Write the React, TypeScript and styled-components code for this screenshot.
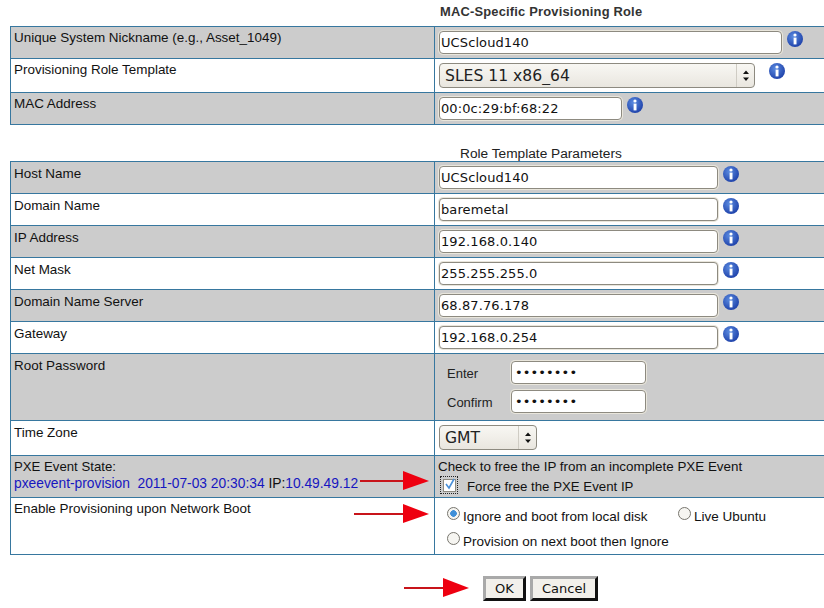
import React from "react";
import styled, { createGlobalStyle } from "styled-components";

const Global = createGlobalStyle`
  html, body { margin: 0; padding: 0; background: #fff; overflow: hidden; }
  body { font-family: "Liberation Sans", Arial, sans-serif; font-size: 13px; color: #111; }
`;
const Page = styled.div`
  position: relative; width: 824px; height: 608px; overflow: hidden; padding-left: 10px; box-sizing: border-box;
`;
const Heading = styled.div<{ $bold?: boolean; $left: number; $h: number; $pb: number }>`
  height: ${(p) => p.$h}px; box-sizing: border-box; padding-left: ${(p) => p.$left}px;
  display: flex; align-items: flex-end; padding-bottom: ${(p) => p.$pb}px;
  font-weight: ${(p) => (p.$bold ? 700 : 400)}; color: ${(p) => (p.$bold ? "#333" : "#222")};
  font-size: ${(p) => (p.$bold ? "12.9px" : "13.7px")}; letter-spacing: ${(p) => (p.$bold ? "0.2px" : "0")};
`;
const Table = styled.table`
  width: 830px; table-layout: fixed; border-collapse: collapse;
`;
const Row = styled.tr<{ $gray?: boolean; $h: number }>`
  height: ${(p) => p.$h}px; background: ${(p) => (p.$gray ? "#cccccc" : "#ffffff")};
`;
const Label = styled.td<{ $top?: number }>`
  width: 424px; box-sizing: border-box; border: 1px solid #37779f; vertical-align: top;
  padding: ${(p) => p.$top ?? 4}px 3px 0;
  line-height: 16px; font-size: 13.45px;
`;
const Value = styled.td`
  border: 1px solid #37779f; vertical-align: top; padding: 4px 4px 0; line-height: 16px;
`;
const Line = styled.div`
  display: flex; align-items: flex-start;
`;
const Text = styled.input<{ $w: number }>`
  width: ${(p) => p.$w}px; height: 23px; box-sizing: border-box; margin: 0; padding: 0 1px;
  border: 1px solid #8d8a80; border-radius: 4px; background: #fff; outline: none;
  box-shadow: 0 0 0 1px #e9e6dc; font: 13px "DejaVu Sans", sans-serif; color: #111; letter-spacing: 0.1px;
  &[type="password"] { padding: 0 3px; }
`;
const Info = styled.svg<{ $ml: number }>`
  width: 16px; height: 16px; margin-left: ${(p) => p.$ml}px; flex: none;
`;
const SelectBox = styled.div<{ $w: number }>`
  position: relative; width: ${(p) => p.$w}px; height: 25px; flex: none;
`;
const Select = styled.select`
  appearance: none; width: 100%; height: 100%; box-sizing: border-box; margin: 0; padding: 0 5px;
  border: 1px solid #8d8a80; border-radius: 4px; outline: none; color: #222;
  background: linear-gradient(#f8f7f3, #e9e6df); font: 15.6px "DejaVu Sans", sans-serif;
`;
const Arrows = styled.svg`
  position: absolute; right: 0; top: 1px; width: 18px; height: 23px; border-left: 1px solid #cfccc4; pointer-events: none;
`;
const PassGroup = styled.div`
  padding-top: 3px;
`;
const PassRow = styled.div`
  display: flex; align-items: center; height: 23px; margin-bottom: 6px;
`;
const PassLabel = styled.span`
  width: 72px; padding: 2px 0 0 8px; box-sizing: border-box; color: #222; font-size: 13px;
`;
const Blue = styled.span`
  color: #1616c0; white-space: pre;
`;
const PxeTitle = styled.div`
  font-size: 13.2px;
`;
const PxeLine = styled.div`
  white-space: pre; font-size: 13.8px; margin-top: 1px;
`;
const FreeLine = styled.div`
  white-space: pre; font-size: 13.4px; margin: -1px 0 0 -1px;
`;
const CheckRow = styled.div`
  display: flex; align-items: flex-start; margin-top: 1px; margin-left: 1px;
`;
const Focus = styled.span`
  width: 16px; height: 16px; border: 1px dotted #222; display: flex; align-items: center; justify-content: center;
`;
const CheckBox = styled.input`
  appearance: none; width: 13px; height: 13px; margin: 0; border: 1px solid #8d8a80; background: #fff; display: block;
`;
const CheckMark = styled.svg`
  position: absolute; left: 3px; top: 1px; width: 14px; height: 14px;
`;
const FocusWrap = styled.span`
  position: relative; display: inline-block;
`;
const CheckLabel = styled.label`
  margin-left: 9px; padding-top: 3px; font-size: 13.25px;
`;
const RadioRow = styled.div<{ $mt: number }>`
  display: flex; align-items: center; margin-top: ${(p) => p.$mt}px; padding-left: 8px; height: 20px;
`;
const Radio = styled.input`
  appearance: none; width: 13px; height: 13px; margin: 0 3px 3px 0; border-radius: 50%; border: 1px solid #77756e; flex: none;
  background: #f6f5f1;
  &:checked { background: radial-gradient(circle, #3f8fd8 0 3px, #f6f5f1 3.6px); }
`;
const RadioLabel = styled.label<{ $w?: number }>`
  width: ${(p) => (p.$w ? `${p.$w}px` : "auto")}; padding-top: 4px; font-size: 13.5px;
`;
const Actions = styled.div`
  display: flex; gap: 4px; padding: 21px 0 0 473px;
`;
const Btn = styled.button<{ $w: number }>`
  width: ${(p) => p.$w}px; height: 25px; box-sizing: border-box; padding: 0; margin: 0;
  border: 3px solid; border-color: #a9a9a9 #111 #111 #a9a9a9; background: #f2f0eb; color: #111;
  font: 13px "DejaVu Sans", sans-serif;
`;
const Overlay = styled.svg`
  position: absolute; left: 0; top: 0; width: 824px; height: 608px; pointer-events: none;
`;

const InfoIcon = ({ ml }: { ml: number }) => (
  <Info $ml={ml} viewBox="0 0 16 16">
    <defs>
      <radialGradient id="ig" cx="40%" cy="35%" r="70%">
        <stop offset="0%" stopColor="#5b8be0" />
        <stop offset="100%" stopColor="#1c3fa8" />
      </radialGradient>
    </defs>
    <circle cx="8" cy="8" r="8" fill="url(#ig)" />
    <circle cx="8" cy="4" r="1.6" fill="#fff" />
    <rect x="6.6" y="6.6" width="2.9" height="6.8" fill="#fff" />
  </Info>
);

const Sel = ({ w, value }: { w: number; value: string }) => (
  <SelectBox $w={w}>
    <Select defaultValue={value}>
      <option>{value}</option>
    </Select>
    <Arrows viewBox="0 0 18 23">
      <path d="M9 6.5l3 3.5H6zM9 17l-3-3.5h6z" fill="#111" />
    </Arrows>
  </SelectBox>
);

const Arrow = ({ x0, x1, tip, y }: { x0: number; x1: number; tip: number; y: number }) => (
  <g>
    <rect x={x0} y={y - 1} width={x1 - x0} height={2} fill="#c8141a" />
    <polygon points={`${x1},${y - 10} ${tip},${y} ${x1},${y + 9}`} fill="#ee0010" />
  </g>
);

const params: [string, string][] = [
  ["Host Name", "UCScloud140"],
  ["Domain Name", "baremetal"],
  ["IP Address", "192.168.0.140"],
  ["Net Mask", "255.255.255.0"],
  ["Domain Name Server", "68.87.76.178"],
  ["Gateway", "192.168.0.254"],
];

export default function App() {
  return (
    <Page>
      <Global />
      <Heading $bold $left={430} $h={26} $pb={7}>MAC-Specific Provisioning Role</Heading>
      <Table>
        <tbody>
          <Row $gray $h={32}>
            <Label $top={3}>Unique System Nickname (e.g., Asset_1049)</Label>
            <Value><Line><Text $w={343} defaultValue="UCScloud140" /><InfoIcon ml={5} /></Line></Value>
          </Row>
          <Row $h={34}>
            <Label $top={3}>Provisioning Role Template</Label>
            <Value><Line><Sel w={316} value="SLES 11 x86_64" /><InfoIcon ml={14} /></Line></Value>
          </Row>
          <Row $gray $h={32}>
            <Label $top={3}>MAC Address</Label>
            <Value><Line><Text $w={183} defaultValue="00:0c:29:bf:68:22" /><InfoIcon ml={5} /></Line></Value>
          </Row>
        </tbody>
      </Table>
      <Heading $left={450} $h={36} $pb={0}>Role Template Parameters</Heading>
      <Table>
        <tbody>
          {params.map(([l, v], i) => (
            <Row key={l} $gray={i % 2 === 0} $h={32}>
              <Label>{l}</Label>
              <Value><Line><Text $w={279} defaultValue={v} /><InfoIcon ml={5} /></Line></Value>
            </Row>
          ))}
          <Row $gray $h={67}>
            <Label>Root Password</Label>
            <Value>
              <PassGroup>
                <PassRow><PassLabel>Enter</PassLabel><Text $w={135} type="password" defaultValue="password" /></PassRow>
                <PassRow><PassLabel>Confirm</PassLabel><Text $w={135} type="password" defaultValue="password" /></PassRow>
              </PassGroup>
            </Value>
          </Row>
          <Row $h={35}>
            <Label>Time Zone</Label>
            <Value><Sel w={98} value="GMT" /></Value>
          </Row>
          <Row $gray $h={42}>
            <Label $top={3}>
              <PxeTitle>PXE Event State:</PxeTitle>
              <PxeLine>
                <Blue>pxeevent-provision  2011-07-03 20:30:34</Blue> IP:<Blue>10.49.49.12</Blue>
              </PxeLine>
            </Label>
            <Value>
              <FreeLine>Check to free the IP from an incomplete PXE Event</FreeLine>
              <CheckRow>
                <FocusWrap>
                  <Focus><CheckBox type="checkbox" defaultChecked /></Focus>
                  <CheckMark viewBox="0 0 14 14"><path d="M3 7l3 4 5-9" fill="none" stroke="#4a90d9" strokeWidth="1.6" /></CheckMark>
                </FocusWrap>
                <CheckLabel>Force free the PXE Event IP</CheckLabel>
              </CheckRow>
            </Value>
          </Row>
          <Row $h={57}>
            <Label $top={3}>Enable Provisioning upon Network Boot</Label>
            <Value>
              <RadioRow $mt={3}>
                <Radio type="radio" name="b" defaultChecked />
                <RadioLabel $w={215}>Ignore and boot from local disk</RadioLabel>
                <Radio type="radio" name="b" />
                <RadioLabel>Live Ubuntu</RadioLabel>
              </RadioRow>
              <RadioRow $mt={5}>
                <Radio type="radio" name="b" />
                <RadioLabel>Provision on next boot then Ignore</RadioLabel>
              </RadioRow>
            </Value>
          </Row>
        </tbody>
      </Table>
      <Actions>
        <Btn $w={43}>OK</Btn>
        <Btn $w={68}>Cancel</Btn>
      </Actions>
      <Overlay viewBox="0 0 824 608">
        <Arrow x0={360} x1={403} tip={429} y={481} />
        <Arrow x0={354} x1={403} tip={429} y={514} />
        <Arrow x0={404} x1={443} tip={469} y={588} />
      </Overlay>
    </Page>
  );
}
